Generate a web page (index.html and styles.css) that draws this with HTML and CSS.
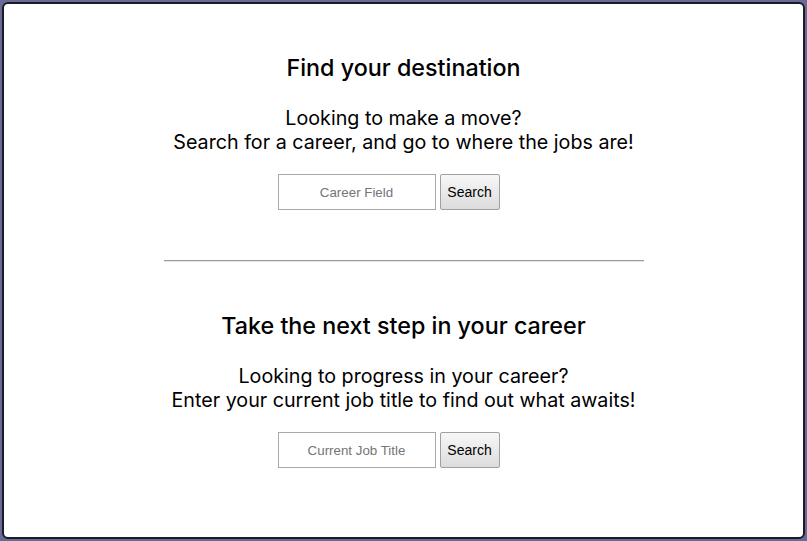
FILE: index.html
```html
<!DOCTYPE html>
<html lang="en">
<head>
<meta charset="utf-8">
<title>Find your destination</title>
<link rel="stylesheet" href="styles.css">
</head>
<body>
<main class="page">
  <section class="block block-first">
    <h2 class="title">Find your destination</h2>
    <p class="lead">Looking to make a move?<br>Search for a career, and go to where the jobs are!</p>
    <form class="search">
      <input class="field" type="text" placeholder="Career Field">
      <button class="btn" type="button">Search</button>
    </form>
  </section>
  <hr class="divider">
  <section class="block">
    <h2 class="title">Take the next step in your career</h2>
    <p class="lead">Looking to progress in your career?<br>Enter your current job title to find out what awaits!</p>
    <form class="search">
      <input class="field" type="text" placeholder="Current Job Title">
      <button class="btn" type="button">Search</button>
    </form>
  </section>
</main>
</body>
</html>
```

FILE: styles.css
```css
html {
  background: #6a6a9a;
  height: 100%;
}
body {
  margin: 2px;
  height: 537px;
  box-sizing: border-box;
  border: 2px solid #1b1b22;
  border-radius: 6px;
  background: #fff;
  font-family: Inter, "Noto Sans", sans-serif;
  color: #000;
  overflow: hidden;
}
.page {
  display: flex;
  flex-direction: column;
  align-items: center;
  padding-top: 51px;
}
.block {
  display: flex;
  flex-direction: column;
  align-items: center;
  text-align: center;
}
.title {
  margin: 0;
  font-size: 23.3px;
  line-height: 26px;
  font-weight: 500;
}
.lead {
  margin: 25px 0 20px;
  font-size: 19.7px;
  line-height: 24px;
  font-weight: 400;
}
.search {
  display: flex;
  gap: 4px;
  height: 36px;
  padding-right: 30px;
}
.field {
  box-sizing: border-box;
  width: 158px;
  height: 36px;
  margin: 0;
  border: 1px solid #a9a9a9;
  padding: 0 8px;
  text-align: center;
  font-family: "Liberation Sans", Arial, sans-serif;
  font-size: 13.333px;
  color: #333;
  background: #fff;
}
.field::placeholder {
  color: #757575;
}
.btn {
  box-sizing: border-box;
  height: 36px;
  width: 60px;
  margin: 0;
  border: 1px solid #a0a0a0;
  border-radius: 2px;
  background: linear-gradient(#f7f7f7, #dcdcdc);
  font-family: "Liberation Sans", Arial, sans-serif;
  font-size: 14px;
  color: #000;
  padding: 0;
}
.divider {
  width: 480px;
  margin: 50px 0 51px;
  border: 0;
  border-top: 1px solid #9a9a9a;
  border-bottom: 1px solid #e6e6e6;
  height: 0;
}
```
